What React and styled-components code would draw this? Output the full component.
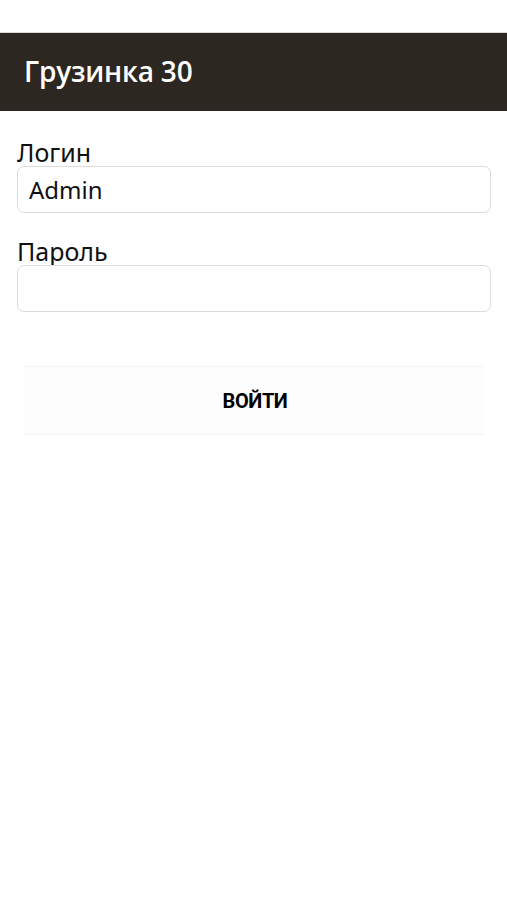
import React from 'react';
import styled, { createGlobalStyle } from 'styled-components';

const GlobalStyle = createGlobalStyle`
  body {
    margin: 0;
    background: #ffffff;
    font-family: "Liberation Sans", Arial, sans-serif;
  }
`

const Page = styled.div`
  min-height: 900px;
  padding-top: 32px;
  background: #ffffff;
`

const Header = styled.header`
  height: 79px;
  background: #2d2722;
  display: flex;
  align-items: center;
  padding: 0 24px 2px;
  border-top: 1px solid #d8d8d8;
  box-sizing: border-box;
`

const Title = styled.h1`
  margin: 0;
  color: #ffffff;
  font-family: "Open Sans", "Noto Sans", sans-serif;
  font-weight: 600;
  font-size: 28px;
  letter-spacing: -0.2px;
`

const Form = styled.form`
  padding: 27px 16px 0 17px;
  display: flex;
  flex-direction: column;
`

const Field = styled.div`
  display: flex;
  flex-direction: column;
  margin-bottom: ${p => p.last ? '0' : '24px'};
`

const Label = styled.label`
  font-family: "Noto Sans", sans-serif;
  font-size: 25px;
  line-height: 28px;
  color: #111;
`

const Input = styled.input`
  height: 47px;
  box-sizing: border-box;
  border: 1px solid #dcdcdc;
  border-radius: 7px;
  padding: 0 11px;
  font-family: "Noto Sans", sans-serif;
  font-size: 24px;
  color: #111;
  background: #fff;
  outline: none;
`

const ButtonRow = styled.div`
  margin: 54px 23px 0 24px;
  border-top: 1px solid #f3f3f3;
  border-bottom: 1px solid #f3f3f3;
  background: #fdfdfd;
  height: 69px;
  box-sizing: border-box;
  display: flex;
  align-items: center;
  justify-content: center;
`

const Button = styled.button`
  border: none;
  background: transparent;
  font-family: Roboto, "DejaVu Sans", sans-serif;
  font-weight: 700;
  font-size: 20px;
  letter-spacing: -0.4px;
  color: #000;
  cursor: pointer;
  padding: 0;
  margin-left: 2px;
`

const App = () => {
  return (
    <Page>
      <GlobalStyle />
      <Header>
        <Title>Грузинка 30</Title>
      </Header>
      <Form onSubmit={e => e.preventDefault()}>
        <Field>
          <Label>Логин</Label>
          <Input defaultValue="Admin" />
        </Field>
        <Field last>
          <Label>Пароль</Label>
          <Input type="password" />
        </Field>
      </Form>
      <ButtonRow>
        <Button>ВОЙТИ</Button>
      </ButtonRow>
    </Page>
  );
}

export default App;
